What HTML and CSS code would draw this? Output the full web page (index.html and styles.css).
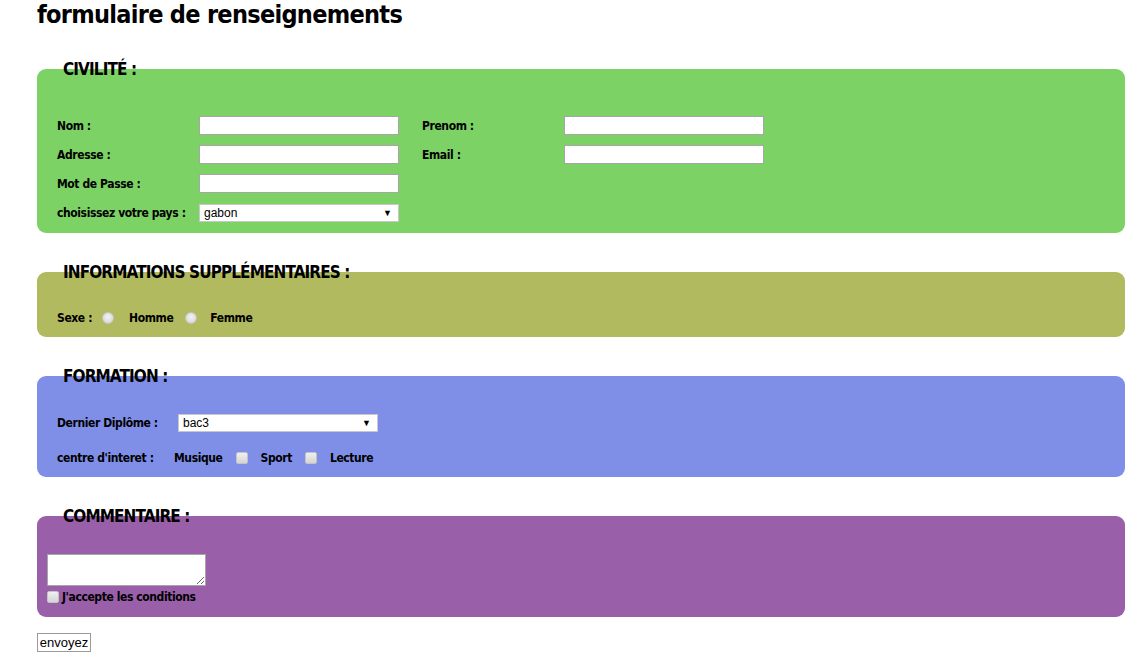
FILE: index.html
```html
<!DOCTYPE html>
<html lang="fr">
<head>
<meta charset="utf-8">
<title>formulaire de renseignements</title>
<link rel="stylesheet" href="styles.css">
</head>
<body>
<main class="page">
  <h1 class="title">formulaire de renseignements</h1>
  <form class="form">
    <fieldset class="box box-civ">
      <legend class="legend">CIVILITÉ :</legend>
      <div class="grid">
        <label class="lbl">Nom :</label>
        <span class="cell"><input class="field" type="text"></span>
        <label class="lbl">Prenom :</label>
        <span class="cell"><input class="field" type="text"></span>
        <label class="lbl">Adresse :</label>
        <span class="cell"><input class="field" type="text"></span>
        <label class="lbl">Email :</label>
        <span class="cell"><input class="field" type="text"></span>
        <label class="lbl">Mot de Passe :</label>
        <span class="cell"><input class="field" type="password"></span>
        <span></span><span></span>
        <label class="lbl">choisissez votre pays :</label>
        <span class="cell"><span class="select"><span class="select-val">gabon</span><span class="arrow">▼</span></span></span>
      </div>
    </fieldset>

    <fieldset class="box box-info">
      <legend class="legend">INFORMATIONS SUPPLÉMENTAIRES :</legend>
      <div class="row">
        <span class="lbl">Sexe :</span>
        <span class="radio r1"></span>
        <span class="lbl">Homme</span>
        <span class="radio r2"></span>
        <span class="lbl">Femme</span>
      </div>
    </fieldset>

    <fieldset class="box box-form">
      <legend class="legend">FORMATION :</legend>
      <div class="row row-dip">
        <span class="lbl w-dip">Dernier Diplôme :</span>
        <span class="select"><span class="select-val">bac3</span><span class="arrow">▼</span></span>
      </div>
      <div class="row row-int">
        <span class="lbl w-int">centre d'interet :</span>
        <span class="lbl">Musique</span>
        <span class="check c1"></span>
        <span class="lbl">Sport</span>
        <span class="check c2"></span>
        <span class="lbl">Lecture</span>
      </div>
    </fieldset>

    <fieldset class="box box-com">
      <legend class="legend">COMMENTAIRE :</legend>
      <textarea class="comment"></textarea>
      <div class="row row-acc">
        <span class="check c3"></span>
        <span class="lbl">J'accepte les conditions</span>
      </div>
    </fieldset>

    <button class="send" type="button">envoyez</button>
  </form>
</main>
</body>
</html>
```

FILE: styles.css
```css
html, body {
  margin: 0;
  padding: 0;
  background: #fff;
}

.page {
  margin: 0 23px 0 37px;
  font-family: "DejaVu Sans Condensed", sans-serif;
  color: #000;
}

.title {
  margin: 0;
  font-family: "DejaVu Sans Condensed", sans-serif;
  font-weight: bold;
  font-size: 25px;
  line-height: 30px;
  letter-spacing: -0.7px;
}

.form {
  margin-top: 28px;
}

.box {
  border: none;
  border-radius: 9px;
  margin: 0 0 28px 0;
  padding: 0 10px 11px 10px;
  min-width: 0;
}

.box-civ { background: #7dd266; padding-top: 36px; }
.box-info { background: #b1ba5e; padding-top: 27px; }
.box-form { background: #7f8fe7; padding-top: 27px; }
.box-com { background: #995fa8; padding-top: 27px; padding-bottom: 13px; margin-bottom: 15px; }

.legend {
  padding: 0;
  margin-left: 16px;
  font-family: "DejaVu Sans Condensed", sans-serif;
  font-weight: bold;
  font-size: 17px;
  line-height: 22px;
  letter-spacing: -0.9px;
}

.lbl {
  font-family: "DejaVu Sans Condensed", sans-serif;
  font-weight: bold;
  font-size: 12px;
  letter-spacing: -0.4px;
  white-space: nowrap;
}

.grid {
  display: grid;
  grid-template-columns: 142px 223px 142px 200px;
  grid-auto-rows: 19px;
  row-gap: 10px;
  align-items: center;
  padding-left: 10px;
}

.cell {
  display: flex;
  align-items: center;
}

.field {
  box-sizing: border-box;
  width: 200px;
  height: 19px;
  margin: 0;
  border: 1px solid #a6a6a6;
  background: #fff;
}

.select {
  box-sizing: border-box;
  display: inline-flex;
  align-items: center;
  justify-content: space-between;
  width: 200px;
  height: 18px;
  padding: 0 6px 0 4px;
  background: #fff;
  border: 1px solid #c8c8c8;
  font-family: "Liberation Sans", Arial, sans-serif;
  font-size: 12px;
}

.arrow {
  font-size: 9px;
}

.row {
  display: flex;
  align-items: center;
  padding-left: 10px;
  height: 16px;
}

.radio {
  box-sizing: border-box;
  width: 12px;
  height: 12px;
  border-radius: 50%;
  border: 1px solid #c4c4c4;
  background: radial-gradient(circle at 50% 40%, #f2f2f2, #d2d2d2);
}

.r1 { margin: 0 15px 0 10px; }
.r2 { margin: 0 13px 0 12px; }

.check {
  box-sizing: border-box;
  width: 12px;
  height: 12px;
  border: 1px solid #c4c4c4;
  border-radius: 2px;
  background: linear-gradient(#f0f0f0, #d4d4d4);
}

.c1 { margin: 0 13px 0 13px; }
.c2 { margin: 0 13px 0 13px; }
.c3 { margin: 0 3px 0 0; }

.row-dip { height: 18px; }
.w-dip { width: 121px; }
.row-int { margin-top: 18px; }
.w-int { width: 117px; }

.comment {
  display: block;
  box-sizing: border-box;
  width: 159px;
  height: 32px;
  margin: 0;
  border: 1px solid #a6a6a6;
  resize: both;
}

.row-acc {
  padding-left: 0;
  margin-top: 4px;
  height: 14px;
}

.send {
  font-family: "Liberation Sans", Arial, sans-serif;
  font-size: 13px;
  padding: 0 1px;
  margin: 0;
  background: #fff;
  border: 1px solid #9a9a9a;
  border-radius: 0;
  height: 19px;
  width: 54px;
}
```
